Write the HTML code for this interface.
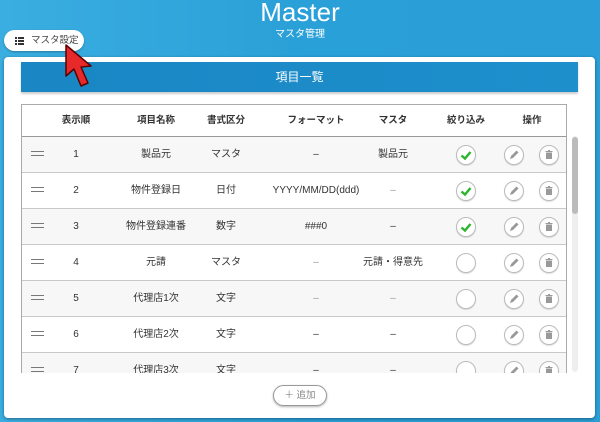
<!DOCTYPE html>
<html><head><meta charset="utf-8"><style>
*{box-sizing:border-box;margin:0;padding:0}
body{width:600px;height:422px;overflow:hidden;position:relative;background:linear-gradient(90deg,#3aaee0 0%,#2aa0d8 50%,#2a9ed6 100%);font-family:"Liberation Sans","Noto Sans CJK JP",sans-serif;color:#333}
.abs{position:absolute}
.title{left:0;width:600px;top:-3px;text-align:center;color:#fff;font-size:26px}
.sub{left:0;width:600px;top:25px;text-align:center;color:#fff;font-size:10px}
.btn{left:4px;top:30px;width:80px;height:21px;background:#fff;border-radius:11px;font-size:9.5px;color:#444;line-height:21px;padding-left:27px;box-shadow:0 1px 2px rgba(0,0,0,.3);white-space:nowrap}
.card{left:4px;top:57px;width:591px;height:361px;background:#fff;border-radius:4px;box-shadow:0 1px 3px rgba(0,0,0,.4)}
.hbar{left:21px;top:62px;width:557px;height:30px;background:linear-gradient(90deg,#1a86c4,#1d90cc);color:#fff;font-size:12px;text-align:center;line-height:30px;box-shadow:0 2px 2px rgba(0,0,0,.2)}
.tbl{left:21px;top:104px;width:546px;height:269px;border:1px solid #aaa;border-bottom:none;overflow:hidden;background:#fff}
.row{position:absolute;left:0;width:546px;height:36px;border-bottom:1px solid #c8c8c8;font-size:10px}
.row.g{background:#f7f7f7}
.c{position:absolute;top:0;height:36px;line-height:36px;text-align:center;white-space:nowrap}
.hd .c{font-weight:bold;font-size:9.5px;color:#333;line-height:32px;height:32px}
.lt{color:#999}
.hand{position:absolute;left:9px;top:14px;width:13px;height:5px;border-top:1.5px solid #777;border-bottom:1.5px solid #777}
.ci{position:absolute;width:20px;height:20px;border-radius:50%;border:1px solid #bbb;background:#fff;top:8px;box-shadow:0 1px 1px rgba(0,0,0,.12)}
.sb{left:572px;top:136px;width:6px;height:236px;background:#eee;border-radius:3px}
.th{left:572px;top:137px;width:6px;height:77px;background:#bbb;border-radius:3px}
.add{left:273px;top:385px;width:54px;height:21px;border:1px solid #999;border-radius:11px;font-size:9.5px;color:#888;text-align:center;line-height:19px;background:#fff;box-shadow:0 1px 2px rgba(0,0,0,.3)}
</style></head><body>
<div class="abs title">Master</div>
<div class="abs sub">マスタ管理</div>
<div class="abs card"></div>
<div class="abs btn"><svg style="position:absolute;left:11px;top:7px" width="9" height="8" viewBox="0 0 9 8" fill="#333"><rect x="0" y="0" width="2" height="2"/><rect x="3" y="0" width="6" height="2"/><rect x="0" y="3" width="2" height="2"/><rect x="3" y="3" width="6" height="2"/><rect x="0" y="6" width="2" height="2"/><rect x="3" y="6" width="6" height="2"/></svg>マスタ設定</div>
<div class="abs hbar">項目一覧</div>
<div class="abs tbl">
 <div class="row hd" style="top:0;height:32px;border-bottom:1px solid #999">
  <div class="c" style="left:34px;width:40px">表示順</div>
  <div class="c" style="left:104px;width:60px">項目名称</div>
  <div class="c" style="left:174px;width:60px">書式区分</div>
  <div class="c" style="left:244px;width:100px">フォーマット</div>
  <div class="c" style="left:341px;width:60px">マスタ</div>
  <div class="c" style="left:414px;width:60px">絞り込み</div>
  <div class="c" style="left:490px;width:40px">操作</div>
 </div>
 <div id="rows"></div>
</div>
<div class="abs sb"></div><div class="abs th"></div>
<div class="abs add">＋ 追加</div>
<svg class="abs" style="left:60px;top:42px" width="34" height="58" viewBox="0 0 34 58"><path d="M6 3 L6 34 L14 27 L21 44 L28 41 L21 25 L31 24 Z" fill="#e8292a" stroke="#5a0000" stroke-width="1.5" stroke-linejoin="round"/></svg>
<script>
var d=[["1","製品元","マスタ","–","製品元",1,0],["2","物件登録日","日付","YYYY/MM/DD(ddd)","–",1,1],["3","物件登録連番","数字","###0","–",1,0],["4","元請","マスタ","–","元請・得意先",0,1],["5","代理店1次","文字","–","–",0,1],["6","代理店2次","文字","–","–",0,0],["7","代理店3次","文字","–","–",0,0]];
var h="";d.forEach(function(r,i){var t=32+i*36;
var ck=r[5]?'<div class="ci" style="left:434px"><svg width="18" height="18" viewBox="0 0 18 18" style="position:absolute;left:0;top:0"><path d="M4.5 9.5 L8 12.5 L13.5 6" fill="none" stroke="#2cb52c" stroke-width="2.4"/></svg></div>':'<div class="ci" style="left:434px"></div>';
h+='<div class="row'+(i%2==0?' g':'')+'" style="top:'+t+'px"><div class="hand"></div>'+
'<div class="c" style="left:34px;width:40px">'+r[0]+'</div>'+
'<div class="c" style="left:99px;width:70px">'+r[1]+'</div>'+
'<div class="c" style="left:174px;width:60px">'+r[2]+'</div>'+
'<div class="c'+(r[3]=='–'&&r[6]?' lt':'')+'" style="left:244px;width:100px">'+r[3]+'</div>'+
'<div class="c'+(r[4]=='–'&&(i==1||i==4)?' lt':'')+'" style="left:331px;width:80px">'+r[4]+'</div>'+ck+
'<div class="ci" style="left:482px"><svg width="18" height="18" viewBox="0 0 18 18" style="position:absolute;left:0;top:0"><path d="M5 13 L6 10 L11.5 4.5 L13.5 6.5 L8 12 Z" fill="#999"/></svg></div>'+
'<div class="ci" style="left:517px"><svg width="18" height="18" viewBox="0 0 18 18" style="position:absolute;left:0;top:0"><rect x="5.5" y="5" width="7" height="1" fill="#999"/><rect x="8" y="4" width="2" height="1" fill="#999"/><rect x="6" y="6.5" width="6" height="6.5" fill="#999"/></svg></div></div>';});
document.getElementById("rows").outerHTML=h;
</script>
</body></html>
